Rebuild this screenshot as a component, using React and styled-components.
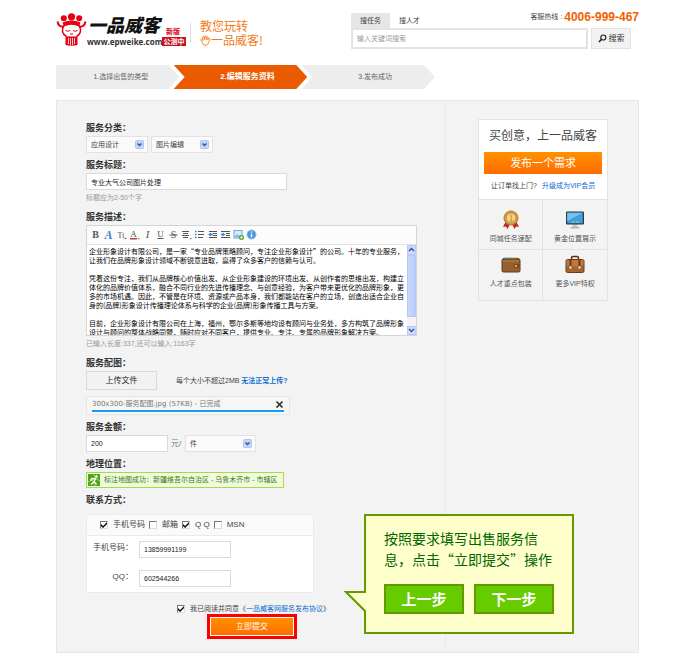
import React from "react";
import styled, { createGlobalStyle } from "styled-components";

const SANS = '"Liberation Sans", "Noto Sans CJK SC", sans-serif';
const CJK = '"Noto Sans CJK SC", "Liberation Sans", sans-serif';
const LINE = "#e2e2e2";
const ORANGE = "linear-gradient(#ff9200, #ff6c00)";

const GlobalStyle = createGlobalStyle`
  *, *::before, *::after { box-sizing: border-box; }
  body { margin: 0; background: #fff; color: #444; font: 7px/12px ${SANS}; }
  input, select, textarea, button { font: inherit; color: inherit; margin: 0; padding: 0; border-radius: 0; }
  a { color: #0a6ccf; text-decoration: none; }
`;

const Page = styled.div`
  margin: 0 61px 10px 56px;
`;

/* ---------- header ---------- */
const Header = styled.header`
  display: flex;
  justify-content: space-between;
  padding-top: 11px;
  height: 65px;
`;
const Brand = styled.div`
  display: flex;
  align-items: flex-start;
  white-space: nowrap;
`;
const Mascot = styled.svg`
  width: 31px;
  height: 35px;
  margin-top: 2px;
`;
const BrandText = styled.div`
  display: grid;
  grid-template-columns: 74px 24px;
  column-gap: 1px;
`;
const BrandName = styled.span`
  font: italic 900 18px/26px ${CJK};
  color: #111;
  padding-left: 1px;
`;
const BrandEdition = styled.span`
  color: #d7000f;
  font-weight: bold;
  line-height: 10px;
  align-self: end;
  padding-left: 4px;
`;
const BrandUrl = styled.span`
  font: bold 8px/10px "Open Sans", Lato, sans-serif;
  color: #333;
`;
const BrandBadge = styled.span`
  background: #c8101c;
  color: #fff;
  font-weight: bold;
  line-height: 9px;
  height: 9px;
  text-align: center;
`;
const Slogan = styled.div`
  display: flex;
  flex-direction: column;
  justify-content: center;
  border-left: 1px solid #ddd;
  margin: 12px 0 0 4px;
  padding-left: 9px;
  height: 20px;
  color: #f37a21;
  font: 12px/14px ${CJK};
`;
const SloganLine = styled.div`
  display: flex;
  align-items: center;
`;

const SearchArea = styled.div`
  flex: 0 0 288px;
`;
const SearchTop = styled.div`
  display: flex;
  align-items: flex-end;
  height: 17px;
`;
const Tab = styled.button`
  border: 0;
  height: 15px;
  padding: 0 9px;
  background: ${(p) => (p.$active ? "#e6e6e6" : "transparent")};
`;
const Hotline = styled.div`
  margin-left: auto;
  display: flex;
  align-items: center;
  height: 22px;
  gap: 2px;
  white-space: nowrap;
`;
const Phone = styled.strong`
  color: #f26100;
  font-size: 12px;
`;
const SearchRow = styled.form`
  display: flex;
  gap: 3px;
  height: 21px;
  padding-right: 8px;
`;
const SearchInput = styled.input`
  flex: 1;
  min-width: 0;
  border: 2px solid #e3e3e3;
  padding: 0 4px;
  background: #fff;
  &::placeholder { color: #999; opacity: 1; }
`;
const SearchButton = styled.button`
  flex: 0 0 40px;
  display: flex;
  align-items: center;
  justify-content: center;
  gap: 2px;
  border: 1px solid ${LINE};
  background: #f2f2f2;
  color: #333;
  font-size: 8px;
`;

/* ---------- steps ---------- */
const Steps = styled.ol`
  list-style: none;
  display: flex;
  width: 65%;
  margin: 0 0 11px;
  padding: 0;
`;
const Step = styled.li`
  flex: 1 1 133px;
  height: 24px;
  line-height: 24px;
  text-align: center;
  color: ${(p) => (p.$active ? "#fff" : "#666")};
  font-size: ${(p) => (p.$active ? "8px" : "7px")};
  font-weight: ${(p) => (p.$active ? "bold" : "normal")};
  background: ${(p) => (p.$active ? "#ea5b00" : "#ededed")};
  padding-left: 14px;
  clip-path: polygon(0 0, calc(100% - 11px) 0, 100% 50%, calc(100% - 11px) 100%, 0 100%, 11px 50%);
  & + & { margin-left: -6px; }
  &:first-child {
    flex-basis: 123px;
    padding-left: 6px;
    clip-path: polygon(0 0, calc(100% - 11px) 0, 100% 50%, calc(100% - 11px) 100%, 0 100%);
  }
`;

/* ---------- panel ---------- */
const Panel = styled.main`
  position: relative;
  display: grid;
  grid-template-columns: 67fr 33fr;
  border: 1px solid #e6e6e6;
  background: #f3f3f3;
`;
const FormColumn = styled.form`
  padding: 19px 28px 13px 29px;
  border-right: 1px solid #e9e9e9;
`;
const Field = styled.section`
  margin-bottom: 4px;
`;
const Label = styled.label`
  display: block;
  font-size: 9px;
  font-weight: bold;
  line-height: 16px;
  color: #333;
`;
const Row = styled.div`
  display: flex;
  align-items: center;
  gap: 3px;
`;
const TextBox = styled.input`
  display: block;
  width: ${(p) => p.$width}px;
  height: 17px;
  border: 1px solid #dadada;
  background: #fff;
  padding: 0 4px;
  color: #222;
`;
const Hint = styled.div`
  line-height: 15px;
  color: #999;
`;
const SelectWrap = styled.span`
  position: relative;
  display: block;
  width: ${(p) => p.$width}px;
`;
const SelectBox = styled.select`
  appearance: none;
  display: block;
  width: 100%;
  height: 17px;
  border: 1px solid ${LINE};
  background: #fafafa;
  padding: 0 4px;
`;
const SelectArrow = styled.svg`
  position: absolute;
  right: 4px;
  top: 4px;
  width: 9px;
  height: 9px;
  pointer-events: none;
`;

const Editor = styled.div`
  border: 1px solid #d5d5d5;
  background: #fff;
`;
const Toolbar = styled.div`
  display: flex;
  align-items: center;
  height: 19px;
  padding: 0 2px 2px;
  border-bottom: 1px solid ${LINE};
  background: #fcfcfc;
`;
const Tool = styled.button`
  width: 13px;
  height: 13px;
  border: 0;
  background: none;
  display: flex;
  align-items: center;
  justify-content: center;
  & svg { width: 11px; height: 11px; }
`;
const EditorBody = styled.div`
  display: flex;
  height: 90px;
`;
const EditorText = styled.textarea`
  flex: 1;
  min-width: 0;
  border: 0;
  resize: none;
  overflow: hidden;
  white-space: pre;
  padding: 2px 2px 0;
  outline: 0;
  background: #fff;
  color: #000;
  font: 7px/9px ${CJK};
`;
const ScrollTrack = styled.div`
  flex: 0 0 9px;
  display: flex;
  flex-direction: column;
  background: #f4f4f8;
`;
const ScrollButton = styled.button`
  height: 10px;
  border: 1px solid #b9cbf5;
  background: #ccdafd;
  display: flex;
  align-items: center;
  justify-content: center;
  & svg { width: 7px; height: 5px; }
`;
const ScrollThumb = styled.div`
  height: 66px;
  border: 1px solid #b4c8f6;
  background: linear-gradient(90deg, #cbd9fd, #b9cdfb);
`;

const UploadRow = styled.div`
  display: flex;
  align-items: center;
  gap: 19px;
  margin-bottom: 6px;
`;
const UploadButton = styled.button`
  width: 71px;
  height: 19px;
  border: 1px solid #dadada;
  background: #f2f2f2;
  color: #222;
  font-size: 8px;
`;
const StrongLink = styled.a`
  font-weight: bold;
`;
const FileBox = styled.div`
  width: 204px;
  height: 19px;
  border: 1px solid #e6e6e6;
  background: #f6f6f6;
  padding: 1px 5px;
`;
const FileLine = styled.div`
  display: flex;
  justify-content: space-between;
  align-items: center;
  height: 12px;
  font-family: "DejaVu Sans", ${CJK};
  color: #777;
`;
const CloseButton = styled.button`
  border: 0;
  background: none;
  width: 9px;
  height: 9px;
  display: flex;
  & svg { width: 9px; height: 9px; }
`;
const Progress = styled.div`
  height: 2px;
  background: #1a9af0;
`;
const Unit = styled.span`
  width: 11px;
  white-space: nowrap;
  font-size: 8px;
  color: #777;
`;
const MapNotice = styled.div`
  display: flex;
  align-items: center;
  gap: 4px;
  width: 198px;
  height: 16px;
  padding: 0 2px 0 1px;
  border: 1px solid #a9d84a;
  background: #f0fadf;
  color: #3a7d0c;
  white-space: nowrap;
  & svg { width: 12px; height: 12px; flex: none; }
`;

const ContactBox = styled.div`
  width: 228px;
  margin-top: 6px;
  border: 1px solid #eaeaea;
  background: #fff;
`;
const ContactHead = styled.div`
  display: flex;
  align-items: center;
  gap: 4px;
  height: 21px;
  padding-left: 13px;
  border-bottom: 1px solid #eaeaea;
  background: #fafafa;
`;
const CheckLabel = styled.label`
  display: flex;
  align-items: center;
  gap: 5px;
  font-size: ${(p) => (p.$small ? "7px" : "8px")};
  white-space: nowrap;
`;
const Check = styled.input`
  appearance: none;
  width: 8px;
  height: 8px;
  display: block;
  background: #fff;
  border: 1px solid;
  border-color: #777 #ddd #ddd #777;
  &:checked::after {
    content: "";
    display: block;
    width: 6px;
    height: 6px;
    background: #111;
    clip-path: polygon(0 35%, 35% 65%, 100% 0, 100% 38%, 35% 100%, 0 70%);
  }
`;
const ContactFields = styled.div`
  display: grid;
  gap: 12px;
  padding: 5px 0;
`;
const ContactRow = styled.div`
  display: grid;
  grid-template-columns: 46px 1fr;
  column-gap: 6px;
`;
const ContactLabel = styled.label`
  text-align: right;
  font-size: 8px;
  line-height: 14px;
  white-space: nowrap;
`;
const Agreement = styled.div`
  display: flex;
  height: 10px;
  margin: 11px 0 0 91px;
`;
const SubmitFrame = styled.div`
  width: 90px;
  margin-left: 121px;
  border: 3px solid #f00;
  padding: 1px;
  background: #fff;
`;
const SubmitButton = styled.button`
  display: block;
  width: 100%;
  height: 17px;
  border: 0;
  background: ${ORANGE};
  color: #fff;
  font-size: 8px;
`;

/* ---------- sidebar ---------- */
const Sidebar = styled.aside`
  padding: 18px 30px 0 32px;
`;
const Card = styled.div`
  border: 1px solid ${LINE};
`;
const CardTop = styled.div`
  background: #fff;
  padding: 6px 5px;
  height: 80px;
  text-align: center;
  border-bottom: 1px solid ${LINE};
`;
const CardTitle = styled.h2`
  margin: 0 0 8px;
  font: 12px/18px ${CJK};
  color: #444;
  white-space: nowrap;
`;
const PostButton = styled.button`
  display: block;
  width: 100%;
  height: 22px;
  border: 0;
  background: ${ORANGE};
  color: #fff;
  font-size: 11px;
`;
const VipLine = styled.div`
  display: flex;
  justify-content: center;
  gap: 5px;
  margin-top: 6px;
  white-space: nowrap;
`;
const Services = styled.div`
  display: grid;
  grid-template-columns: 1fr 1fr;
  grid-auto-rows: 50px;
`;
const Service = styled.a`
  display: flex;
  flex-direction: column;
  align-items: center;
  justify-content: flex-start;
  gap: 3px;
  padding-top: ${(p) => (p.$upper ? "10px" : "5px")};
  color: #555;
  white-space: nowrap;
  border-right: ${(p) => (p.$left ? `1px solid ${LINE}` : "0")};
  border-bottom: ${(p) => (p.$upper ? `1px solid ${LINE}` : "0")};
  & svg { width: 20px; height: 20px; flex: none; }
`;

/* ---------- guide bubble over the form ---------- */
const Bubble = styled.div`
  position: absolute;
  left: 307px;
  bottom: 18px;
  width: 210px;
  padding: 12px 18px 18px;
  border: 2px solid #690;
  background: #ffc;
`;
const BubbleTail = styled.svg`
  position: absolute;
  left: -22px;
  top: 74px;
  width: 22px;
  height: 25px;
`;
const BubbleText = styled.p`
  margin: 0 0 14px;
  font: 14px/21px ${CJK};
  color: #060;
  white-space: nowrap;
`;
const BubbleActions = styled.div`
  display: flex;
  gap: 10px;
`;
const BubbleButton = styled.button`
  flex: 1;
  height: 30px;
  border: 2px solid #690;
  background: #6c0;
  color: #fff;
  font: bold 15px/20px ${CJK};
`;

const DESCRIPTION = `企业形象设计有限公司，是一家“专业品牌策略顾问，专注企业形象设计”的公司。十年的专业服务，
让我们在品牌形象设计领域不断锐意进取，赢得了众多客户的信赖与认可。

凭着这份专注，我们从品牌核心价值出发、从企业形象建设的环境出发、从创作者的思维出发，构建立
体化的品牌价值体系，融合不同行业的先进传播理念、与创意经验，为客户带来更优化的品牌形象，更
多的市场机遇。因此，不管是在环境、资源或产品本身，我们都能站在客户的立场，创造出适合企业自
身的(品牌)形象设计传播理论体系与科学的企业(品牌)形象传播工具与方案。

目前，企业形象设计有限公司在上海，福州，鄂尔多斯等地均设有顾问与业务处，多方构筑了品牌形象
设计与顾问的整体战略同盟，随时应对不同客户，提供专业、专注、专属的品牌形象解决方案。`;

const G = "#555";
const serif = { fontFamily: "Liberation Serif", fontSize: 11, textAnchor: "middle" };
const TOOLS = [
  ["加粗", <text {...serif} x="5.5" y="9" fontSize="10" fontWeight="bold" fill={G}>B</text>],
  ["字体", <text {...serif} x="5.5" y="9.5" fontSize="12" fontWeight="bold" fontStyle="italic" fill="#3f7fd0">A</text>],
  ["字号", <><text {...serif} x="5" y="9" fontSize="8" fill={G}>Tt</text><path d="M8 9h3l-1.500 1.500z" fill="#777" /></>],
  ["颜色", <><text {...serif} x="4.500" y="8" fontSize="9" fill={G}>A</text><path d="M1 9h7v1.500H1z" fill="#c43c3c" /><path d="M8.500 9h2.500l-1.200 1.500z" fill="#777" /></>],
  ["斜体", <text {...serif} x="5.5" y="9" fontStyle="italic" fill={G}>I</text>],
  ["下划线", <><text {...serif} x="5.5" y="8" fontSize="9" fill={G}>U</text><path d="M2.500 9.500h6" stroke={G} /></>],
  ["删除线", <><text {...serif} x="5.5" y="9" fontSize="10" fill={G}>S</text><path d="M1.500 6h8" stroke={G} /></>],
  ["对齐", <><path d="M1 2.500h7M2 4.500h5M1 6.500h7M2 8.500h5" stroke={G} /><path d="M8.500 9h2.500l-1.200 1.500z" fill="#777" /></>],
  ["列表", <><path d="M4 2.500h6M4 5.500h6M4 8.500h5" stroke={G} /><path d="M1 2.500h1.500M1 5.500h1.500M1 8.500h1.500" stroke="#3f7fd0" strokeWidth="1.5" /></>],
  ["减少缩进", <><path d="M2 2.500h8M6 4.500h4M6 6.500h4M2 8.500h8" stroke={G} /><path d="M1 5.500l3-2v1.200h2v1.600H4v1.200z" fill="#3f7fd0" /></>],
  ["增加缩进", <><path d="M1 2.500h9M6 4.500h4M6 6.500h4M1 8.500h9" stroke={G} /><path d="M5.500 5.500l-3-2v1.200H1v1.600h1.500v1.200z" fill="#3f7fd0" /></>],
  ["图片", <><rect x="1" y="1.500" width="8" height="7.500" fill="#d7eafa" stroke="#6fa5d8" /><path d="M1.500 8l2.500-3 2 2 1-1 2 2z" fill="#7fb3df" /><circle cx="8.500" cy="8.500" r="2.500" fill="#4ea72e" /><path d="M7 8.500h3M8.500 7v3" stroke="#fff" strokeWidth=".8" /></>],
  ["帮助", <><circle cx="5.500" cy="5.500" r="4.500" fill="#4b98dc" stroke="#8bbce8" /><path d="M5.500 4.800v3.400M5.500 2.500v1.200" stroke="#fff" strokeWidth="1.400" /></>],
];

function MascotIcon() {
  return (
    <Mascot viewBox="0 0 31 35" aria-hidden="true">
      <g fill="#e60012">
        <circle cx="7.800" cy="5.200" r="3" />
        <circle cx="15.500" cy="3.800" r="3.600" />
        <circle cx="23.200" cy="5.200" r="3" />
        <path d="M6.500 9.500q9-4 18 0l-1.500 4q-7.500-3.500-15 0z" />
        <path d="M9.500 23.500h12v8.500q-6 1.500-12 0z" />
      </g>
      <path d="M1.500 8.500q1 6 6.500 5M29.500 8.500q-1 6-6.500 5" fill="none" stroke="#e60012" strokeWidth="2" />
      <path d="M8 12q-4 8 2.500 11.500M23 12q4 8-2.500 11.500" fill="none" stroke="#e60012" strokeWidth="1.500" />
      <path d="M9.500 17.500q2 1.500 4.500 0M17 17.500q2.500 1.500 4.500 0M14 21h3" fill="none" stroke="#e60012" />
      <path d="M12.500 25v6M14.500 25v7M16.500 25v7M18.500 25v6" stroke="#fff" strokeWidth=".8" />
    </Mascot>
  );
}

function HandIcon() {
  return (
    <svg width="11" height="11" viewBox="0 0 11 11" fill="none" stroke="#f37a21" aria-hidden="true">
      <path d="M2 7L.8 4.500q.6-1 1.400 0L3 5.500 2.600 2q.8-1 1.300 0l.6 2.500L4.800 1q.9-.8 1.200 0v3.500L7.300 1.800q1-.4.900.6L7.600 5l1.500-1.600q1-.1.600.9L8.500 8q-1 2.500-3.500 2.300T2 7z" strokeWidth=".9" />
    </svg>
  );
}

function Select({ id, label, width, value }) {
  return (
    <SelectWrap $width={width}>
      <SelectBox id={id} aria-label={label} defaultValue={value}>
        <option>{value}</option>
      </SelectBox>
      <SelectArrow viewBox="0 0 9 9" aria-hidden="true">
        <rect x=".5" y=".5" width="8" height="8" rx="1" fill="#c3d5fc" stroke="#afc5f5" />
        <path d="M2.500 3.500l2 2 2-2" fill="none" stroke="#36548c" strokeWidth="1.500" />
      </SelectArrow>
    </SelectWrap>
  );
}

function Checkbox({ children, checked, small }) {
  return (
    <CheckLabel $small={small}>
      <Check type="checkbox" defaultChecked={checked} />
      <span>{children}</span>
    </CheckLabel>
  );
}

const SERVICES = [
  ["同城任务速配", (
    <svg viewBox="0 0 20 20" aria-hidden="true">
      <path d="M5 11l-3 6 3-.4 1.500 2.400 2.500-5zM15 11l3 6-3-.4-1.500 2.400-2.500-5z" fill="#c8201c" />
      <circle cx="10" cy="8" r="7" fill="#d79b3e" stroke="#b57a28" />
      <circle cx="10" cy="8" r="4.800" fill="#f3d38c" stroke="#c48f3c" strokeWidth=".8" />
      <path d="M9 6.200l1.300-1V11M8.800 11h3" fill="none" stroke="#b98432" strokeWidth=".8" />
    </svg>
  )],
  ["黄金位置展示", (
    <svg viewBox="0 0 20 20" aria-hidden="true">
      <path d="M8 14h4l.6 3H7.400z" fill="#c4c9cd" />
      <path d="M5.500 17h9v1.500h-9z" fill="#aeb4b8" />
      <rect x="1" y="1.500" width="18" height="13" rx="1" fill="#30373d" />
      <rect x="2.200" y="2.700" width="15.600" height="10.600" fill="#3b9ee0" />
      <path d="M2.200 2.700h15.600L2.200 11z" fill="#76c1ef" />
      <path d="M7 12h1M9 12h1M11 12h1M13 12h1" stroke="#e4f36b" />
    </svg>
  )],
  ["人才重点包装", (
    <svg viewBox="0 0 20 20" aria-hidden="true">
      <path d="M2 3h16v4H2z" fill="#6a3c17" />
      <path d="M3 2.500h6v2H3z" fill="#59b1d4" />
      <path d="M9 2.500h7v2H9z" fill="#86bf4a" />
      <rect x="1" y="4" width="18" height="13" rx="1.200" fill="#95602f" stroke="#64391a" />
      <path d="M2 6h16" stroke="#b98149" />
      <path d="M13.500 9H19v4h-5.500q-2-2 0-4z" fill="#7b4a20" />
      <circle cx="14.800" cy="11" r="1" fill="#e8c984" />
    </svg>
  )],
  ["更多VIP特权", (
    <svg viewBox="0 0 20 20" aria-hidden="true">
      <path d="M6.500 5V3q0-1.500 1.500-1.500h4q1.500 0 1.500 1.500v2" fill="none" stroke="#5c3113" strokeWidth="1.500" />
      <rect x="1" y="4.500" width="18" height="13" rx="1.500" fill="#a8642f" stroke="#6e3c18" />
      <path d="M1.500 5h17v5.500q-8.500 2-17 0z" fill="#bd7840" />
      <path d="M4.500 5h2v8h-2zM13.500 5h2v8h-2z" fill="#6b3b19" />
      <path d="M4 11h3v3H4zM13 11h3v3h-3z" fill="#e5ddd0" stroke="#805532" strokeWidth=".6" />
    </svg>
  )],
];

export default function App() {
  return (
    <>
      <GlobalStyle />
      <Page>
        <Header>
          <Brand>
            <MascotIcon />
            <BrandText>
              <BrandName>一品威客</BrandName>
              <BrandEdition>新版</BrandEdition>
              <BrandUrl>www.epweike.com</BrandUrl>
              <BrandBadge>公测中</BrandBadge>
            </BrandText>
            <Slogan>
              <SloganLine>教您玩转</SloganLine>
              <SloganLine><HandIcon />一品威客!</SloganLine>
            </Slogan>
          </Brand>
          <SearchArea>
            <SearchTop>
              <Tab type="button" $active>搜任务</Tab>
              <Tab type="button">搜人才</Tab>
              <Hotline>客服热线 : <Phone>4006-999-467</Phone></Hotline>
            </SearchTop>
            <SearchRow>
              <SearchInput type="text" aria-label="搜索" placeholder="输入关键词搜索" />
              <SearchButton type="button">
                <svg width="9" height="9" viewBox="0 0 9 9" fill="none" stroke="#222" aria-hidden="true">
                  <circle cx="5.300" cy="3.500" r="2.500" strokeWidth="1.200" />
                  <path d="M3.500 5.300L1 8" strokeWidth="1.600" />
                </svg>
                搜索
              </SearchButton>
            </SearchRow>
          </SearchArea>
        </Header>

        <Steps>
          <Step>1.选择出售的类型</Step>
          <Step $active>2.编辑服务资料</Step>
          <Step>3.发布成功</Step>
        </Steps>

        <Panel>
          <FormColumn>
            <Field>
              <Label htmlFor="category">服务分类：</Label>
              <Row>
                <Select id="category" width={62} value="应用设计" />
                <Select label="子分类" width={62} value="图片编辑" />
              </Row>
            </Field>

            <Field>
              <Label htmlFor="title">服务标题：</Label>
              <TextBox id="title" type="text" $width={201} defaultValue="专业大气公司图片处理" />
              <Hint>标题应为2-50个字</Hint>
            </Field>

            <Field>
              <Label htmlFor="description">服务描述：</Label>
              <Editor>
                <Toolbar>
                  {TOOLS.map(([name, drawing]) => (
                    <Tool key={name} type="button" aria-label={name}>
                      <svg viewBox="0 0 11 11" fill="none">{drawing}</svg>
                    </Tool>
                  ))}
                </Toolbar>
                <EditorBody>
                  <EditorText id="description" spellCheck="false" defaultValue={DESCRIPTION} />
                  <ScrollTrack>
                    <ScrollButton type="button" aria-label="向上滚动">
                      <svg viewBox="0 0 7 5"><path d="M1 4l2.500-2.500L6 4" fill="none" stroke="#36548c" strokeWidth="1.500" /></svg>
                    </ScrollButton>
                    <ScrollThumb />
                    <ScrollTrack />
                    <ScrollButton type="button" aria-label="向下滚动">
                      <svg viewBox="0 0 7 5"><path d="M1 1l2.500 2.500L6 1" fill="none" stroke="#36548c" strokeWidth="1.500" /></svg>
                    </ScrollButton>
                  </ScrollTrack>
                </EditorBody>
              </Editor>
              <Hint>已输入长度:337,还可以输入:1163字</Hint>
            </Field>

            <Field>
              <Label as="div">服务配图：</Label>
              <UploadRow>
                <UploadButton type="button">上传文件</UploadButton>
                <span>每个大小不超过2MB <StrongLink href="#help">无法正常上传?</StrongLink></span>
              </UploadRow>
              <FileBox>
                <FileLine>
                  <span>300x300-服务配图.jpg (57KB) - 已完成</span>
                  <CloseButton type="button" aria-label="删除">
                    <svg viewBox="0 0 9 9"><path d="M1.500 1.500l6 6M7.500 1.500l-6 6" stroke="#333" strokeWidth="1.700" /></svg>
                  </CloseButton>
                </FileLine>
                <Progress />
              </FileBox>
            </Field>

            <Field>
              <Label htmlFor="price">服务金额：</Label>
              <Row>
                <TextBox id="price" type="text" $width={82} defaultValue="200" />
                <Unit>元/</Unit>
                <Select label="单位" width={71} value="件" />
              </Row>
            </Field>

            <Field>
              <Label as="div">地理位置：</Label>
              <MapNotice>
                <svg viewBox="0 0 12 12" aria-hidden="true">
                  <rect width="12" height="12" fill="#4fa51c" />
                  <path d="M0 8l4-2 3 6M6 0l1 4 5 3" fill="none" stroke="#b9e38f" strokeWidth=".7" />
                  <circle cx="8.500" cy="2.500" r="1.300" fill="#fff" />
                  <path d="M8 4L6 7.500l2.500 3M7.500 5L4 4.500 2.500 6.500M5.800 8L3 10.500" fill="none" stroke="#fff" strokeWidth="1.300" />
                </svg>
                标注地图成功：新疆维吾尔自治区 - 乌鲁木齐市 - 市辖区
              </MapNotice>
            </Field>

            <Label as="div">联系方式：</Label>
            <ContactBox>
              <ContactHead>
                <Checkbox checked>手机号码</Checkbox>
                <Checkbox>邮箱</Checkbox>
                <Checkbox checked>Q Q</Checkbox>
                <Checkbox>MSN</Checkbox>
              </ContactHead>
              <ContactFields>
                <ContactRow>
                  <ContactLabel htmlFor="mobile">手机号码：</ContactLabel>
                  <TextBox id="mobile" type="text" $width={92} defaultValue="13859991199" />
                </ContactRow>
                <ContactRow>
                  <ContactLabel htmlFor="qq">QQ：</ContactLabel>
                  <TextBox id="qq" type="text" $width={92} defaultValue="602544266" />
                </ContactRow>
              </ContactFields>
            </ContactBox>
            <Agreement>
              <Checkbox checked small>
                我已阅读并同意《<a href="#agreement">一品威客网服务发布协议</a>》
              </Checkbox>
            </Agreement>
            <SubmitFrame>
              <SubmitButton type="button">立即提交</SubmitButton>
            </SubmitFrame>
          </FormColumn>

          <Sidebar>
            <Card>
              <CardTop>
                <CardTitle>买创意，上一品威客</CardTitle>
                <PostButton type="button">发布一个需求</PostButton>
                <VipLine>
                  <span>让订单找上门?</span>
                  <a href="#vip">升级成为VIP会员</a>
                </VipLine>
              </CardTop>
              <Services>
                {SERVICES.map(([name, icon], i) => (
                  <Service key={name} href="#service" $upper={i < 2} $left={i % 2 === 0}>
                    {icon}
                    {name}
                  </Service>
                ))}
              </Services>
            </Card>
          </Sidebar>

          <Bubble role="dialog" aria-label="操作提示">
            <BubbleTail viewBox="0 0 22 25" aria-hidden="true">
              <path d="M22 2H2L22 22" fill="#ffc" stroke="#690" strokeWidth="2" />
            </BubbleTail>
            <BubbleText>按照要求填写出售服务信<br />息，点击“立即提交”操作</BubbleText>
            <BubbleActions>
              <BubbleButton type="button">上一步</BubbleButton>
              <BubbleButton type="button">下一步</BubbleButton>
            </BubbleActions>
          </Bubble>
        </Panel>
      </Page>
    </>
  );
}
